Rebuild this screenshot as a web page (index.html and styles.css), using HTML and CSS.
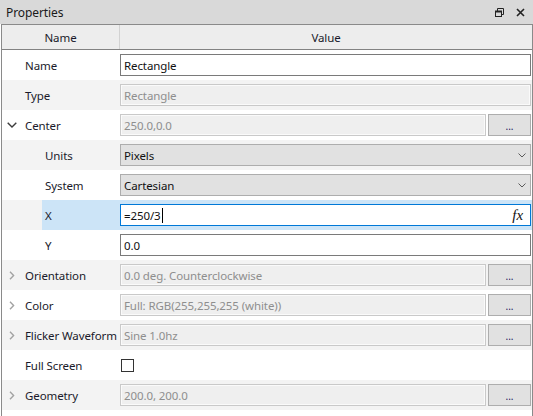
FILE: index.html
```html
<!DOCTYPE html>
<html>
<head>
<meta charset="utf-8">
<link rel="stylesheet" href="styles.css">
</head>
<body>
<div class="panel">
  <div class="titlebar">
    <span class="title">Properties</span>
    <span class="tb-icons">
      <svg class="ico-restore" width="9" height="9" viewBox="0 0 9 9"><path d="M2.5 3V0.5H8.5V6.5H6.5" fill="none" stroke="#222"/><rect x="0.5" y="3.5" width="6" height="5" fill="none" stroke="#222"/><line x1="0" y1="3.5" x2="7" y2="3.5" stroke="#222" stroke-width="2"/></svg>
      <svg class="ico-close" width="9" height="9" viewBox="0 0 9 9"><path d="M1 1L8 8M8 1L1 8" stroke="#222" stroke-width="1.6"/></svg>
    </span>
  </div>
  <div class="table">
    <div class="head">
      <div class="hcell hname">Name</div>
      <div class="hcell">Value</div>
    </div>

    <div class="row l0">
      <div class="gutter"></div>
      <div class="body"><div class="label">Name</div><div class="value"><div class="field">Rectangle</div></div></div>
    </div>
    <div class="row l0 alt">
      <div class="gutter"></div>
      <div class="body"><div class="label">Type</div><div class="value"><div class="field dis">Rectangle</div></div></div>
    </div>
    <div class="row l0">
      <div class="gutter"><svg class="chev-down" width="10" height="6" viewBox="0 0 10 6"><path d="M0.7 0.8L5 5L9.3 0.8" fill="none" stroke="#3c3c3c" stroke-width="1.4"/></svg></div>
      <div class="body"><div class="label">Center</div><div class="value"><div class="field dis">250.0,0.0</div><div class="btn">...</div></div></div>
    </div>
    <div class="row l1 alt">
      <div class="gutter"></div>
      <div class="body"><div class="label">Units</div><div class="value"><div class="field combo"><span>Pixels</span><svg class="chev-combo" width="8" height="5" viewBox="0 0 8 5"><path d="M0.5 0.5L4 4L7.5 0.5" fill="none" stroke="#5a5a5a" stroke-width="1"/></svg></div></div></div>
    </div>
    <div class="row l1">
      <div class="gutter"></div>
      <div class="body"><div class="label">System</div><div class="value"><div class="field combo"><span>Cartesian</span><svg class="chev-combo" width="8" height="5" viewBox="0 0 8 5"><path d="M0.5 0.5L4 4L7.5 0.5" fill="none" stroke="#5a5a5a" stroke-width="1"/></svg></div></div></div>
    </div>
    <div class="row l1 alt sel">
      <div class="gutter"></div>
      <div class="body"><div class="label">X</div><div class="value"><div class="field focus"><span class="caret">=250/3</span><span class="fx">fx</span></div></div></div>
    </div>
    <div class="row l1">
      <div class="gutter"></div>
      <div class="body"><div class="label">Y</div><div class="value"><div class="field">0.0</div></div></div>
    </div>
    <div class="row l0 alt">
      <div class="gutter"><svg class="chev-right" width="6" height="9" viewBox="0 0 6 9"><path d="M1 0.8L4.6 4.5L1 8.2" fill="none" stroke="#a3a3a3" stroke-width="1.4"/></svg></div>
      <div class="body"><div class="label">Orientation</div><div class="value"><div class="field dis">0.0 deg. Counterclockwise</div><div class="btn">...</div></div></div>
    </div>
    <div class="row l0">
      <div class="gutter"><svg class="chev-right" width="6" height="9" viewBox="0 0 6 9"><path d="M1 0.8L4.6 4.5L1 8.2" fill="none" stroke="#a3a3a3" stroke-width="1.4"/></svg></div>
      <div class="body"><div class="label">Color</div><div class="value"><div class="field dis">Full: RGB(255,255,255 (white))</div><div class="btn">...</div></div></div>
    </div>
    <div class="row l0 alt">
      <div class="gutter"><svg class="chev-right" width="6" height="9" viewBox="0 0 6 9"><path d="M1 0.8L4.6 4.5L1 8.2" fill="none" stroke="#a3a3a3" stroke-width="1.4"/></svg></div>
      <div class="body"><div class="label">Flicker Waveform</div><div class="value"><div class="field dis">Sine 1.0hz</div><div class="btn">...</div></div></div>
    </div>
    <div class="row l0">
      <div class="gutter"></div>
      <div class="body"><div class="label">Full Screen</div><div class="value"><span class="check"></span></div></div>
    </div>
    <div class="row l0 alt">
      <div class="gutter"><svg class="chev-right" width="6" height="9" viewBox="0 0 6 9"><path d="M1 0.8L4.6 4.5L1 8.2" fill="none" stroke="#a3a3a3" stroke-width="1.4"/></svg></div>
      <div class="body"><div class="label">Geometry</div><div class="value"><div class="field dis">200.0, 200.0</div><div class="btn">...</div></div></div>
    </div>
  </div>
</div>
</body>
</html>
```

FILE: styles.css
```css
* { box-sizing: border-box; }
body {
  margin: 0;
  background: #fff;
  font-family: "Noto Sans", "Open Sans", sans-serif;
  font-size: 11.5px;
  letter-spacing: -0.1px;
  color: #1e1e1e;
}
.panel {
  width: 533px;
  height: 416px;
  overflow: hidden;
  background: #fff;
}
.titlebar {
  height: 24px;
  background: #d9d9d9;
  display: flex;
  align-items: center;
  padding: 0 8px 0 6px;
}
.title { flex: 1; color: #1a1a1a; font-size: 12px; }
.tb-icons { display: flex; align-items: center; gap: 12px; }
.table {
  margin-left: 1px;
  width: 532px;
  height: 392px;
  border: 1px solid #8a8a8a;
  border-bottom: none;
}
.head {
  display: grid;
  grid-template-columns: 118px 1fr;
  height: 25px;
  background: #ededed;
  border-bottom: 1px solid #828282;
}
.hcell { display: flex; align-items: center; justify-content: center; color: #1a1a2a; }
.hname { border-right: 1px solid #d2d2d2; }
.row { display: flex; height: 30px; }
.row.alt { background: #f3f3f3; }
.gutter {
  flex: 0 0 20px;
  display: flex;
  align-items: center;
  justify-content: center;
}
.l1 .gutter { flex-basis: 40px; }
.body {
  flex: 1;
  display: grid;
  grid-template-columns: 98px 1fr;
}
.l1 .body { grid-template-columns: 78px 1fr; }
.sel .body { background: #cce4f7; }
.label {
  padding-left: 3px;
  padding-top: 1px;
  display: flex;
  align-items: center;
  white-space: nowrap;
  color: #1a1a2a;
}
.value {
  padding: 4px 1px 4px 0;
  display: flex;
  align-items: center;
  gap: 2px;
}
.field {
  flex: 1;
  height: 22px;
  border: 1px solid #7a7a7a;
  background: #fff;
  display: flex;
  align-items: center;
  padding-left: 3px;
  padding-top: 1px;
  color: #111;
  white-space: nowrap;
}
.field.dis {
  border-color: #c9c9c9;
  background: #efefef;
  box-shadow: inset 0 0 0 1px #fafafa;
  color: #8e8e8e;
}
.field.combo {
  background: #e1e1e1;
  border-color: #adadad;
  justify-content: space-between;
  padding-right: 4px;
}
.field.focus { border-color: #0078d7; }
.caret {
  border-right: 1px solid #000;
  padding-right: 1px;
  line-height: 15px;
}
.fx {
  margin-left: auto;
  padding-right: 7px;
  font-family: "Liberation Serif", serif;
  font-style: italic;
  font-size: 15px;
  color: #111;
}
.btn {
  flex: 0 0 43px;
  height: 22px;
  border: 1px solid #adadad;
  background: #e1e1e1;
  display: flex;
  align-items: flex-end;
  justify-content: center;
  padding-bottom: 4px;
  font-size: 10px;
  letter-spacing: 0;
  color: #1a1a60;
  line-height: 1;
}
.check {
  width: 13px;
  height: 13px;
  margin-left: 1px;
  border: 1px solid #333;
  background: #fff;
}
```
